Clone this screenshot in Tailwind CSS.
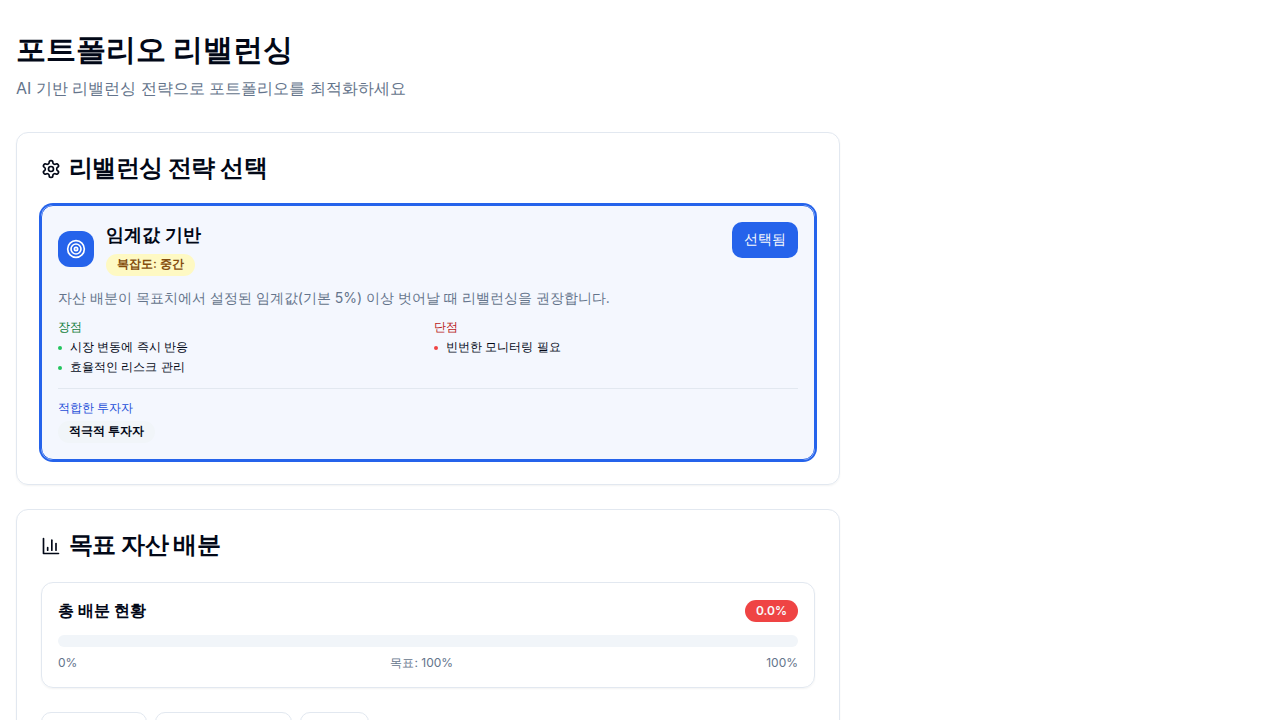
<!DOCTYPE html>
<html lang="ko">
<head>
<meta charset="utf-8">
<title>포트폴리오 리밸런싱</title>
<script src="https://cdn.jsdelivr.net/npm/@tailwindcss/browser@4"></script>
</head>
<body class="h-screen overflow-hidden bg-white font-['Inter',sans-serif] text-[#020817]">
<main class="flex h-screen w-[856px] flex-col overflow-hidden px-4 pt-8">
  <header class="mb-8 shrink-0">
    <h1 class="mb-2 -translate-y-px text-3xl font-bold">포트폴리오 리밸런싱</h1>
    <p class="text-base text-[#64748b]">AI 기반 리밸런싱 전략으로 포트폴리오를 최적화하세요</p>
  </header>
  <div class="flex flex-col gap-6">
    <section class="shrink-0 rounded-xl border border-[#e2e8f0] p-6 shadow-xs">
      <h2 class="mb-6 flex h-6 items-center gap-2 text-2xl leading-none font-semibold tracking-tight">
        <svg class="size-5" viewBox="0 0 24 24" fill="none" stroke="currentColor" stroke-width="2" stroke-linecap="round" stroke-linejoin="round"><path d="M12.22 2h-.44a2 2 0 0 0-2 2v.18a2 2 0 0 1-1 1.73l-.43.25a2 2 0 0 1-2 0l-.15-.08a2 2 0 0 0-2.73.73l-.22.38a2 2 0 0 0 .73 2.73l.15.1a2 2 0 0 1 1 1.72v.51a2 2 0 0 1-1 1.74l-.15.09a2 2 0 0 0-.73 2.73l.22.38a2 2 0 0 0 2.73.73l.15-.08a2 2 0 0 1 2 0l.43.25a2 2 0 0 1 1 1.73V20a2 2 0 0 0 2 2h.44a2 2 0 0 0 2-2v-.18a2 2 0 0 1 1-1.73l.43-.25a2 2 0 0 1 2 0l.15.08a2 2 0 0 0 2.73-.73l.22-.39a2 2 0 0 0-.73-2.73l-.15-.08a2 2 0 0 1-1-1.74v-.5a2 2 0 0 1 1-1.74l.15-.09a2 2 0 0 0 .73-2.73l-.22-.38a2 2 0 0 0-2.73-.73l-.15.08a2 2 0 0 1-2 0l-.43-.25a2 2 0 0 1-1-1.73V4a2 2 0 0 0-2-2z"/><circle cx="12" cy="12" r="3"/></svg>
        <span class="-translate-y-px">리밸런싱 전략 선택</span>
      </h2>
      <div class="rounded-xl border border-[#2563eb] bg-[#2563eb]/5 p-4 shadow-xs ring-2 ring-[#2563eb]">
        <div class="mb-3 flex items-start justify-between">
          <div class="flex items-center gap-3">
            <div class="flex size-9 items-center justify-center rounded-xl bg-[#2563eb] text-white">
              <svg class="size-5" viewBox="0 0 24 24" fill="none" stroke="currentColor" stroke-width="2"><circle cx="12" cy="12" r="10"/><circle cx="12" cy="12" r="6"/><circle cx="12" cy="12" r="2"/></svg>
            </div>
            <div class="flex flex-col items-start gap-1">
              <h3 class="-translate-y-px text-lg font-semibold">임계값 기반</h3>
              <span class="flex rounded-full border border-transparent bg-[#fef9c3] px-2.5 py-0.5 text-xs font-semibold text-[#854d0e]"><span class="-translate-y-px">복잡도: 중간</span></span>
            </div>
          </div>
          <button class="flex h-9 items-center rounded-[10px] bg-[#2563eb] px-3 text-sm font-medium text-[#f8fafc]"><span class="-translate-y-px">선택됨</span></button>
        </div>
        <p class="mb-3 text-sm text-[#64748b]">자산 배분이 목표치에서 설정된 임계값(기본 5%) 이상 벗어날 때 리밸런싱을 권장합니다.</p>
        <div class="mb-3 grid grid-cols-2 gap-3 text-xs">
          <div class="flex flex-col gap-1">
            <div class="-translate-y-px font-medium text-[#15803d]">장점</div>
            <div class="flex items-center gap-2"><i class="size-1 rounded-full bg-[#22c55e]"></i><span class="-translate-y-px">시장 변동에 즉시 반응</span></div>
            <div class="flex items-center gap-2"><i class="size-1 rounded-full bg-[#22c55e]"></i><span class="-translate-y-px">효율적인 리스크 관리</span></div>
          </div>
          <div class="flex flex-col gap-1">
            <div class="-translate-y-px font-medium text-[#b91c1c]">단점</div>
            <div class="flex items-center gap-2"><i class="size-1 rounded-full bg-[#ef4444]"></i><span class="-translate-y-px">빈번한 모니터링 필요</span></div>
          </div>
        </div>
        <div class="flex flex-col items-start gap-1 border-t border-[#e2e8f0] pt-3 text-xs">
          <div class="-translate-y-px font-medium text-[#1d4ed8]">적합한 투자자</div>
          <span class="flex rounded-full border border-transparent bg-[#f1f5f9] px-2.5 py-0.5 font-semibold"><span class="-translate-y-px">적극적 투자자</span></span>
        </div>
      </div>
    </section>
    <section class="shrink-0 rounded-xl border border-[#e2e8f0] p-6 shadow-xs">
      <h2 class="mb-6 flex h-6 items-center gap-2 text-2xl leading-none font-semibold tracking-tight">
        <svg class="size-5" viewBox="0 0 24 24" fill="none" stroke="currentColor" stroke-width="2" stroke-linecap="round" stroke-linejoin="round"><path d="M3 3v18h18"/><path d="M18 17V9"/><path d="M13 17V5"/><path d="M8 17v-3"/></svg>
        <span class="-translate-y-px">목표 자산 배분</span>
      </h2>
      <div class="mb-6 rounded-xl border border-[#e2e8f0] p-4 shadow-xs">
        <div class="mb-3 flex items-center justify-between">
          <h4 class="-translate-y-px font-semibold">총 배분 현황</h4>
          <span class="rounded-full border border-transparent bg-[#ef4444] px-2.5 py-0.5 text-xs font-semibold text-[#f8fafc]">0.0%</span>
        </div>
        <div class="mb-2 h-3 rounded-full bg-[#f1f5f9]"></div>
        <div class="flex justify-between text-xs text-[#64748b]"><span>0%</span><span>목표: 100%</span><span>100%</span></div>
      </div>
      <div class="flex gap-2">
        <div class="h-9 w-[106px] rounded-[10px] border border-[#e2e8f0]"></div>
        <div class="h-9 w-[137px] rounded-[10px] border border-[#e2e8f0]"></div>
        <div class="h-9 w-[68.5px] rounded-[10px] border border-[#e2e8f0]"></div>
      </div>
    </section>
  </div>
</main>
</body>
</html>
